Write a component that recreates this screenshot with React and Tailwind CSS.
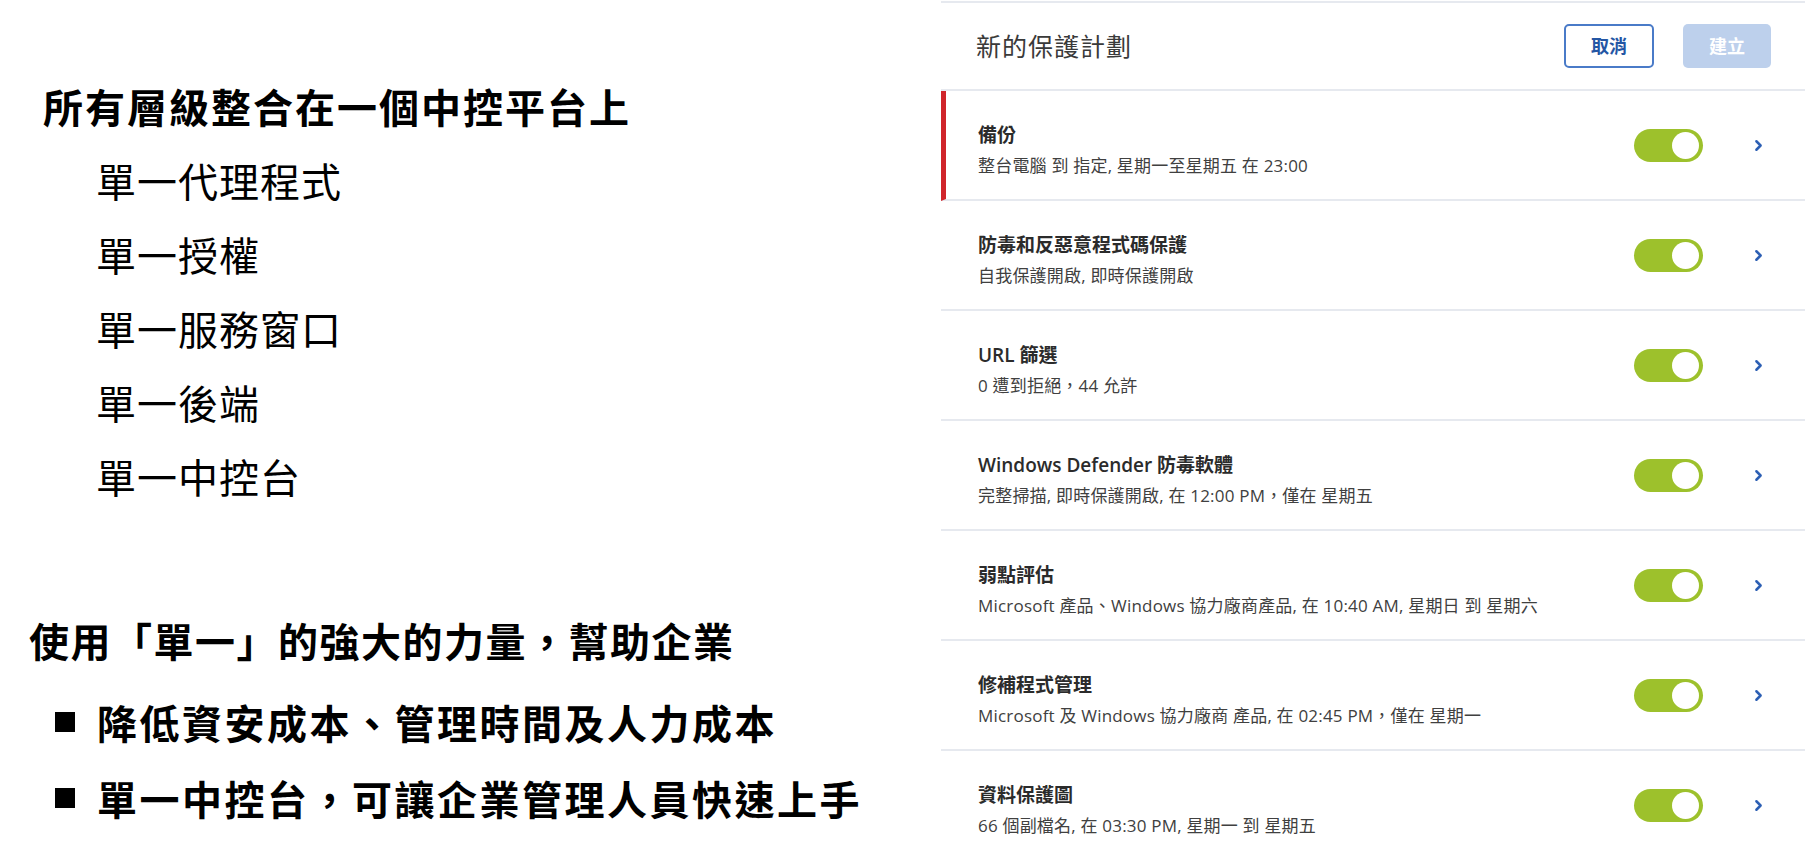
import { ChevronRight } from 'lucide-react';

const points = ['單一代理程式', '單一授權', '單一服務窗口', '單一後端', '單一中控台'];

const benefits = ['降低資安成本、管理時間及人力成本', '單一中控台，可讓企業管理人員快速上手'];

const plans = [
  { title: '備份', desc: '整台電腦 到 指定, 星期一至星期五 在 23:00', active: true },
  { title: '防毒和反惡意程式碼保護', desc: '自我保護開啟, 即時保護開啟' },
  { title: 'URL 篩選', desc: '0 遭到拒絕，44 允許' },
  { title: 'Windows Defender 防毒軟體', desc: '完整掃描, 即時保護開啟, 在 12:00 PM，僅在 星期五' },
  { title: '弱點評估', desc: 'Microsoft 產品、Windows 協力廠商產品, 在 10:40 AM, 星期日 到 星期六' },
  { title: '修補程式管理', desc: 'Microsoft 及 Windows 協力廠商 產品, 在 02:45 PM，僅在 星期一' },
  { title: '資料保護圖', desc: '66 個副檔名, 在 03:30 PM, 星期一 到 星期五' },
];

const Toggle = () => (
  <div className="flex h-[33px] w-[69px] items-center justify-end rounded-full bg-[#9dc12c] pr-[4px]">
    <div className="h-[27px] w-[27px] rounded-full bg-white" />
  </div>
);

const PlanRow = ({ title, desc, active }) => (
  <div
    className={`flex h-[110px] items-center border-b-2 border-[#e6e9ef] pr-[38px] ${
      active ? 'border-l-[5px] border-l-[#d0252b] pl-[32px]' : 'pl-[37px]'
    }`}
  >
    <div className="flex-1 pt-[10px]">
      <div className="text-[19px] font-semibold leading-[24px] text-[#2b2b2b]">{title}</div>
      <div className="mt-[8px] text-[17px] leading-[22px] tracking-[0.2px] text-[#404040]">{desc}</div>
    </div>
    <Toggle />
    <ChevronRight className="ml-[47px] h-[17px] w-[17px] text-[#2c5fb4]" strokeWidth={3.5} />
  </div>
);

export default function App() {
  return (
    <div className="flex h-[849px] w-full overflow-hidden bg-white">
      {/* left: slide text */}
      <div
        className="flex-1 pt-[69px] text-black"
        style={{ fontFamily: '"Noto Sans CJK TC", "Noto Sans", sans-serif' }}
      >
        <h1 className="pl-[43px] text-[40px] font-bold leading-[74px] tracking-[2px]">
          所有層級整合在一個中控平台上
        </h1>
        <ul>
          {points.map((p) => (
            <li key={p} className="pl-[96px] text-[40px] leading-[74px] tracking-[1px]">
              {p}
            </li>
          ))}
        </ul>
        <h2 className="mt-[90px] pl-[29px] text-[40px] font-bold leading-[74px] tracking-[1.5px]">
          使用「單一」的強大的力量，幫助企業
        </h2>
        <ul className="mt-[7px]">
          {benefits.map((b) => (
            <li key={b} className="flex items-center pl-[55px] text-[40px] font-bold leading-[76px] tracking-[2.5px]">
              <span className="mr-[22px] inline-block h-[20px] w-[20px] bg-black" />
              {b}
            </li>
          ))}
        </ul>
      </div>

      {/* right: protection plan panel */}
      <div
        className="mt-[1px] w-[864px] shrink-0 border-t-2 border-[#e6e9ef]"
        style={{ fontFamily: '"Open Sans", "Noto Sans CJK TC", sans-serif' }}
      >
        <div className="flex h-[88px] items-center border-b-2 border-[#e6e9ef] pl-[35px] pr-[34px]">
          <div className="flex-1 text-[25px] leading-[30px] tracking-[1px] text-[#3a3a3a]">新的保護計劃</div>
          <button className="h-[44px] w-[90px] rounded-[5px] border-2 border-[#4a7bc8] text-[18px] font-bold text-[#2456a4]">
            取消
          </button>
          <button className="ml-[29px] h-[44px] w-[88px] rounded-[5px] bg-[#bdd0ec] text-[18px] font-bold text-white">
            建立
          </button>
        </div>
        {plans.map((p) => (
          <PlanRow key={p.title} {...p} />
        ))}
      </div>
    </div>
  );
}
